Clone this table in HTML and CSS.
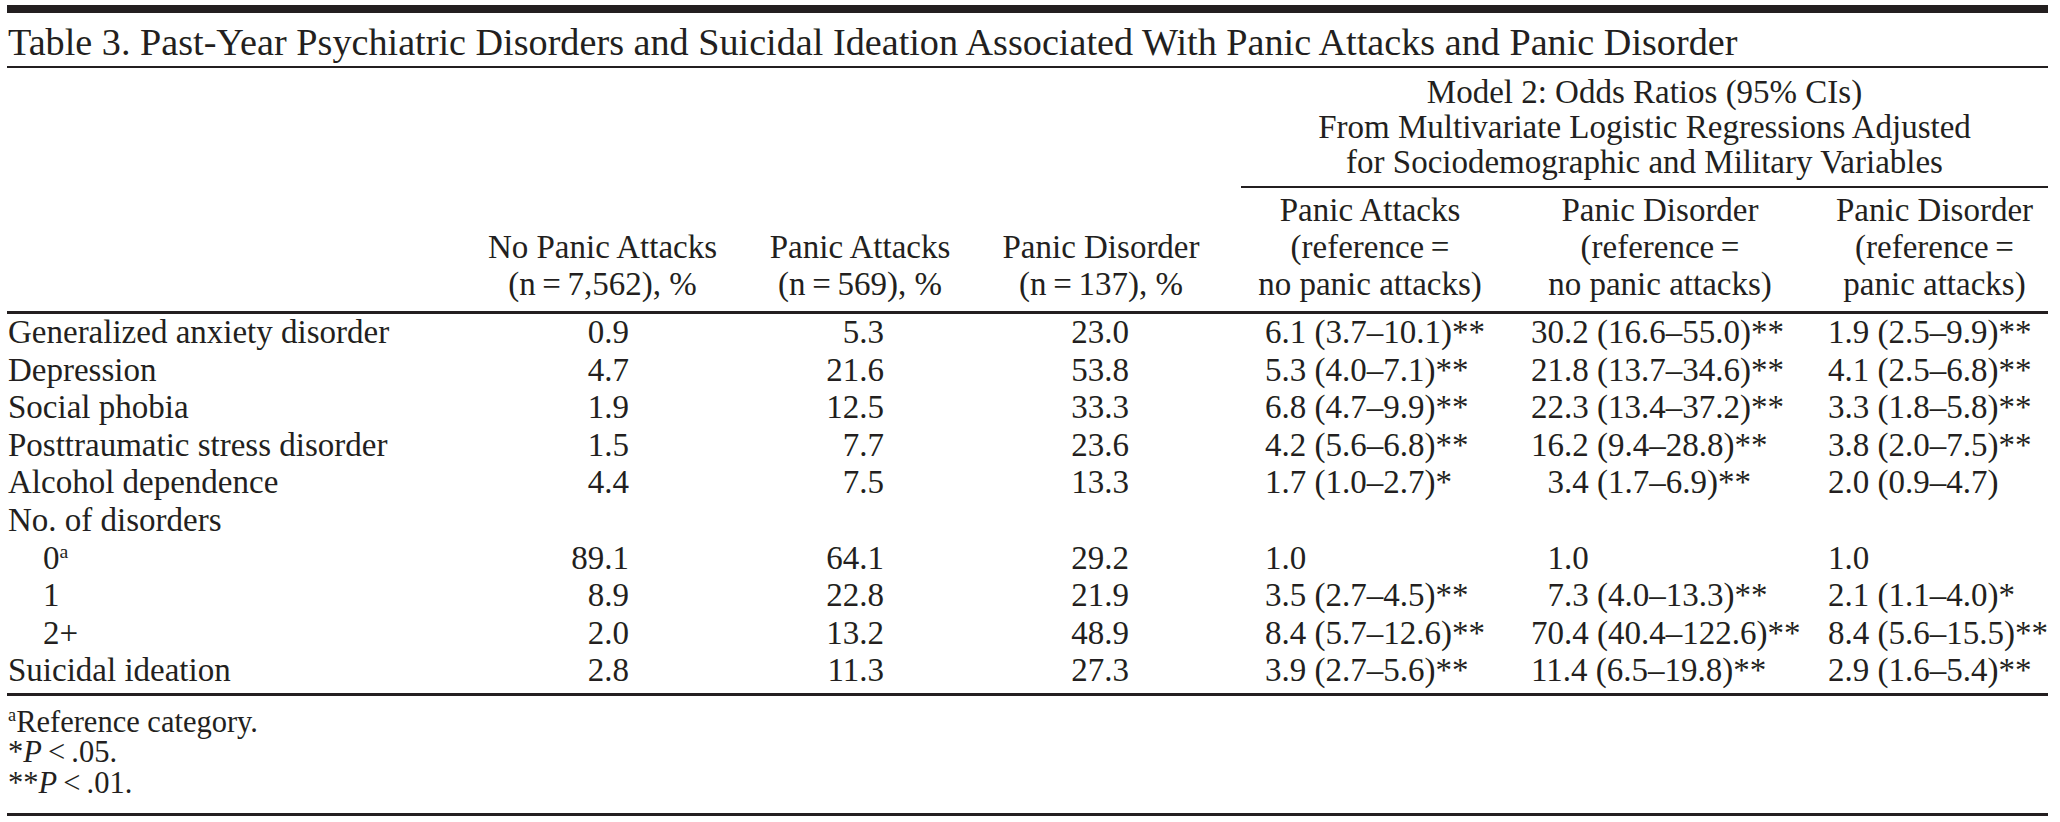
FILE: index.html
```html
<!DOCTYPE html>
<html lang="en">
<head>
<meta charset="utf-8">
<title>Table 3</title>
<link rel="stylesheet" href="styles.css">
</head>
<body>
<div class="page">
  <div class="topbar"></div>
  <h1 class="title">Table 3. Past-Year Psychiatric Disorders and Suicidal Ideation Associated With Panic Attacks and Panic Disorder</h1>
  <table class="t">
    <colgroup>
      <col class="w-stub"><col class="w-c1"><col class="w-c2"><col class="w-c3"><col class="w-c4"><col class="w-c5"><col class="w-c6">
    </colgroup>
    <thead>
      <tr>
        <th class="hs" rowspan="2"></th>
        <th class="hp" rowspan="2">No Panic Attacks<br>(n&#8201;=&#8201;7,562), %</th>
        <th class="hp" rowspan="2">Panic Attacks<br>(n&#8201;=&#8201;569), %</th>
        <th class="hp h3" rowspan="2">Panic Disorder<br>(n&#8201;=&#8201;137), %</th>
        <th class="spanner" colspan="3">Model 2: Odds Ratios (95% CIs)<br>From Multivariate Logistic Regressions Adjusted<br>for Sociodemographic and Military Variables</th>
      </tr>
      <tr>
        <th class="ho">Panic Attacks<br>(reference&#8201;=<br>no panic attacks)</th>
        <th class="ho">Panic Disorder<br>(reference&#8201;=<br>no panic attacks)</th>
        <th class="ho">Panic Disorder<br>(reference&#8201;=<br>panic attacks)</th>
      </tr>
    </thead>
    <tbody>
      <tr><td class="s">Generalized anxiety disorder</td><td class="p1">0.9</td><td class="p2">5.3</td><td class="p3">23.0</td><td class="o4">6.1 (3.7–10.1)**</td><td class="o5">30.2 (16.6–55.0)**</td><td class="o6">1.9 (2.5–9.9)**</td></tr>
      <tr><td class="s">Depression</td><td class="p1">4.7</td><td class="p2">21.6</td><td class="p3">53.8</td><td class="o4">5.3 (4.0–7.1)**</td><td class="o5">21.8 (13.7–34.6)**</td><td class="o6">4.1 (2.5–6.8)**</td></tr>
      <tr><td class="s">Social phobia</td><td class="p1">1.9</td><td class="p2">12.5</td><td class="p3">33.3</td><td class="o4">6.8 (4.7–9.9)**</td><td class="o5">22.3 (13.4–37.2)**</td><td class="o6">3.3 (1.8–5.8)**</td></tr>
      <tr><td class="s">Posttraumatic stress disorder</td><td class="p1">1.5</td><td class="p2">7.7</td><td class="p3">23.6</td><td class="o4">4.2 (5.6–6.8)**</td><td class="o5">16.2 (9.4–28.8)**</td><td class="o6">3.8 (2.0–7.5)**</td></tr>
      <tr><td class="s">Alcohol dependence</td><td class="p1">4.4</td><td class="p2">7.5</td><td class="p3">13.3</td><td class="o4">1.7 (1.0–2.7)*</td><td class="o5"><span class="fig"></span>3.4 (1.7–6.9)**</td><td class="o6">2.0 (0.9–4.7)</td></tr>
      <tr><td class="s">No. of disorders</td><td class="p1"></td><td class="p2"></td><td class="p3"></td><td class="o4"></td><td class="o5"></td><td class="o6"></td></tr>
      <tr><td class="s ind">0<sup class="sup">a</sup></td><td class="p1">89.1</td><td class="p2">64.1</td><td class="p3">29.2</td><td class="o4">1.0</td><td class="o5"><span class="fig"></span>1.0</td><td class="o6">1.0</td></tr>
      <tr><td class="s ind">1</td><td class="p1">8.9</td><td class="p2">22.8</td><td class="p3">21.9</td><td class="o4">3.5 (2.7–4.5)**</td><td class="o5"><span class="fig"></span>7.3 (4.0–13.3)**</td><td class="o6">2.1 (1.1–4.0)*</td></tr>
      <tr><td class="s ind">2+</td><td class="p1">2.0</td><td class="p2">13.2</td><td class="p3">48.9</td><td class="o4">8.4 (5.7–12.6)**</td><td class="o5">70.4 (40.4–122.6)**</td><td class="o6">8.4 (5.6–15.5)**</td></tr>
      <tr class="last"><td class="s">Suicidal ideation</td><td class="p1">2.8</td><td class="p2">11.3</td><td class="p3">27.3</td><td class="o4">3.9 (2.7–5.6)**</td><td class="o5">11.4 (6.5–19.8)**</td><td class="o6">2.9 (1.6–5.4)**</td></tr>
    </tbody>
  </table>
  <div class="notes">
    <p class="note"><sup class="sup">a</sup>Reference category.</p>
    <p class="note">*<i>P</i>&#8201;&lt;&#8201;.05.</p>
    <p class="note">**<i>P</i>&#8201;&lt;&#8201;.01.</p>
  </div>
</div>
</body>
</html>
```

FILE: styles.css
```css
html, body {
  margin: 0;
  padding: 0;
  background: #ffffff;
}

.page {
  width: 2041px;
  margin-left: 7px;
  padding-top: 5px;
  color: #231f20;
  font-family: "Liberation Serif", "Times New Roman", serif;
}

.topbar {
  height: 8px;
  background: #231f20;
}

.title {
  margin: 0;
  padding: 7px 0 2px 1px;
  font-size: 38.2px;
  line-height: 44px;
  font-weight: normal;
  border-bottom: 2px solid #231f20;
  white-space: nowrap;
}

.t {
  width: 2041px;
  table-layout: fixed;
  border-collapse: separate;
  border-spacing: 0;
  font-size: 33px;
}

.w-stub { width: 463px; }
.w-c1 { width: 265px; }
.w-c2 { width: 250px; }
.w-c3 { width: 256px; }
.w-c4 { width: 258px; }
.w-c5 { width: 322px; }
.w-c6 { width: 227px; }

.t th {
  font-weight: normal;
  white-space: nowrap;
  padding: 0;
}

.t th.hs,
.t th.hp {
  vertical-align: bottom;
  border-bottom: 3px solid #231f20;
  padding: 0 0 8px 0;
  line-height: 37px;
}

.t th.hp { text-align: center; }
.t th.h3 { padding-right: 24px; }

.t th.spanner {
  text-align: center;
  line-height: 35px;
  padding: 7px 0 6px 0;
  border-bottom: 2px solid #231f20;
}

.t th.ho {
  text-align: center;
  line-height: 37px;
  padding: 4px 0 8px 0;
  border-bottom: 3px solid #231f20;
}

.t td {
  padding: 0;
  line-height: 37.6px;
  white-space: nowrap;
  vertical-align: baseline;
}

.t td.s { padding-left: 1px; }
.t td.ind { padding-left: 36px; }

.t td.p1 { text-align: right; padding-right: 106px; }
.t td.p2 { text-align: right; padding-right: 101px; }
.t td.p3 { text-align: right; padding-right: 112px; }
.t td.o4 { padding-left: 24px; }
.t td.o5 { padding-left: 32px; }
.t td.o6 { padding-left: 7px; }

.t tr.last td {
  padding-bottom: 3px;
  border-bottom: 3px solid #231f20;
}

.fig {
  display: inline-block;
  width: 0.5em;
}

.sup {
  font-size: 0.6em;
  line-height: 0;
  vertical-align: 0.55em;
}

.notes {
  padding: 11px 0 15px 1px;
  border-bottom: 3px solid #231f20;
  font-size: 30.5px;
  line-height: 30.5px;
}

.note {
  margin: 0;
  white-space: nowrap;
}

.note .sup {
  font-size: 0.6em;
  vertical-align: 0.6em;
}
```
